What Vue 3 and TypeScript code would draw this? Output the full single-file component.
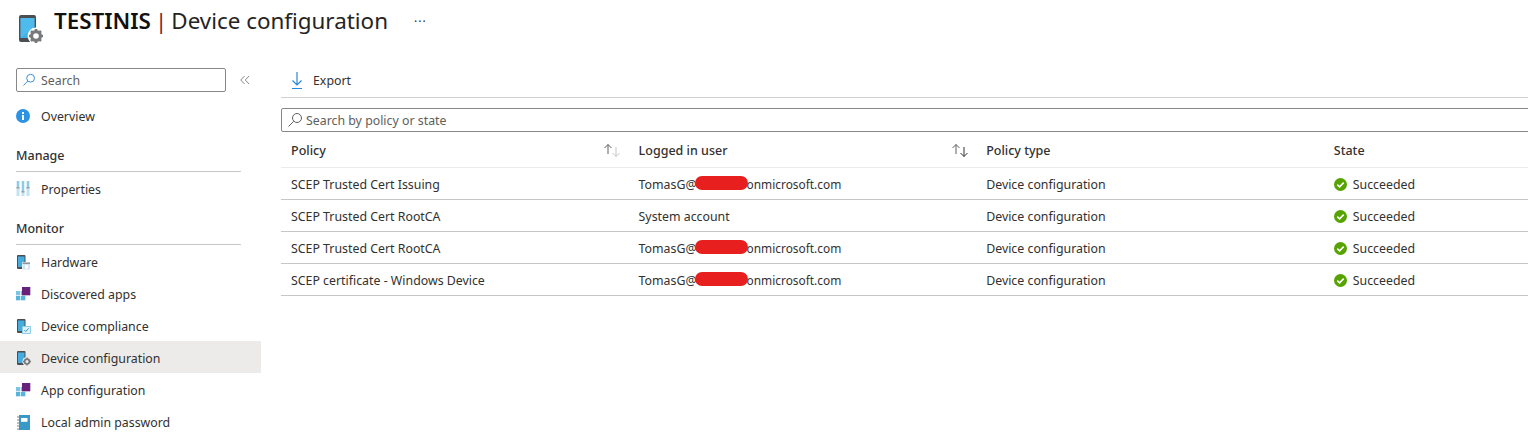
<script setup lang="ts">
const rows = [
  { policy: 'SCEP Trusted Cert Issuing', user: 'TomasG@', tail: 'onmicrosoft.com' },
  { policy: 'SCEP Trusted Cert RootCA', user: 'System account', tail: '' },
  { policy: 'SCEP Trusted Cert RootCA', user: 'TomasG@', tail: 'onmicrosoft.com' },
  { policy: 'SCEP certificate - Windows Device', user: 'TomasG@', tail: 'onmicrosoft.com' },
]
const monitor = [
  { label: 'Hardware', icon: 'hw', active: false },
  { label: 'Discovered apps', icon: 'apps', active: false },
  { label: 'Device compliance', icon: 'comp', active: false },
  { label: 'Device configuration', icon: 'conf', active: true },
  { label: 'App configuration', icon: 'apps', active: false },
  { label: 'Local admin password', icon: 'book', active: false },
]
</script>

<template>
  <div class="page">
    <header class="top">
      <svg class="logo" width="30" height="30" viewBox="0 0 30 30">
        <rect x="4" y="1" width="17" height="27" rx="2" fill="#4b4f54" />
        <rect x="5.500" y="4" width="14" height="20" fill="#3fb0e8" />
        <path d="M19.500 4v9L5.500 24V4z" fill="#5fc4f0" opacity=".5" />
        <circle cx="21" cy="22" r="8.400" fill="#fff" />
        <circle cx="21" cy="22" r="4.400" fill="none" stroke="#77797b" stroke-width="3.200" />
        <path d="M21 15v3M21 26v3M14 22h3M25 22h3M16 17l2.200 2.200M23.800 24.800L26 27M26 17l-2.200 2.200M18.200 24.800L16 27" stroke="#77797b" stroke-width="2.600" />
      </svg>
      <h1 class="title"><b>TESTINIS</b><span class="sep">|</span>Device configuration</h1>
      <span class="dots">···</span>
    </header>

    <div class="body">
      <aside class="side">
        <div class="side-search-row">
          <div class="sbox">
            <svg width="14" height="14" viewBox="0 0 14 14" fill="none" stroke="#3f8fd0" stroke-width="1">
              <circle cx="8.600" cy="5.200" r="3.900" /><path d="M5.800 8L1.500 12.500" />
            </svg>
            <span>Search</span>
          </div>
          <svg class="collapse" width="10" height="10" viewBox="0 0 10 10" fill="none" stroke="#8a8886" stroke-width="1">
            <path d="M4.500 1L.8 5l3.700 4M9 1L5.300 5 9 9" />
          </svg>
        </div>

        <a class="item">
          <svg width="14" height="14" viewBox="0 0 14 14"><circle cx="7" cy="7" r="7" fill="#2b92e4" /><rect x="6" y="6" width="2" height="5" fill="#fff" /><rect x="6" y="3" width="2" height="2" fill="#fff" /></svg>
          <span>Overview</span>
        </a>

        <div class="group">Manage</div>
        <a class="item">
          <svg width="14" height="16" viewBox="0 0 14 16">
            <g fill="#c3e3f3"><rect x="0.500" y="0" width="3" height="15" /><rect x="5.500" y="0" width="3" height="15" /><rect x="10.500" y="0" width="3" height="15" /></g>
            <g fill="#59b4d9"><rect x="1.500" y="0" width="1" height="6" /><rect x="6.500" y="0" width="1" height="10" /><rect x="11.500" y="0" width="1" height="6" /></g>
            <g fill="#9aa0a4"><rect x="0.500" y="6" width="3" height="1.500" /><rect x="5.500" y="10" width="3" height="1.500" /><rect x="10.500" y="6" width="3" height="1.500" /></g>
          </svg>
          <span>Properties</span>
        </a>

        <div class="group second">Monitor</div>
        <a v-for="m in monitor" :key="m.label" class="item" :class="{ active: m.active }">
          <svg width="14" height="16" viewBox="0 0 14 16">
            <template v-if="m.icon === 'apps'">
              <rect x="0" y="5" width="4.300" height="4.300" fill="#7cc4e4" />
              <rect x="5" y="5" width="4.300" height="4.300" fill="#7cc4e4" />
              <rect x="0" y="10" width="4.300" height="4.300" fill="#59b4d9" />
              <rect x="5" y="10" width="4.300" height="4.300" fill="#59b4d9" />
              <rect x="6" y="1" width="8.300" height="8.300" fill="#68217a" />
            </template>
            <template v-else-if="m.icon === 'book'">
              <rect x="3" y="1" width="11" height="15" fill="#3999c6" />
              <rect x="5" y="4" width="6.500" height="3.800" fill="#fff" />
              <path d="M1 3h2.500M1 6h2.500M1 9h2.500M1 12h2.500M1 15h2.500" stroke="#7d7f80" stroke-width="1" />
            </template>
            <template v-else>
              <rect x="1" y="1" width="8.500" height="14" rx="1" fill="#4b4f54" />
              <rect x="2" y="2.500" width="6.500" height="10.500" fill="#45ace0" />
              <g v-if="m.icon === 'hw'">
                <rect x="6" y="8" width="8.500" height="8" fill="#fff" />
                <rect x="6.500" y="8.500" width="7.500" height="7" fill="#cfe6f2" />
                <rect x="6.500" y="8.500" width="7.500" height="1.500" fill="#8f9498" />
                <rect x="9" y="11" width="3" height="3.500" fill="#fff" />
              </g>
              <g v-if="m.icon === 'comp'">
                <rect x="6" y="8" width="9" height="8" fill="#fff" />
                <rect x="6.500" y="8.500" width="8" height="7" fill="#dff0f9" stroke="#7cc4e4" stroke-width=".8" />
                <path d="M8.300 12l1.500 1.500 2.800-3.200" stroke="#3999c6" stroke-width="1" fill="none" />
              </g>
              <g v-if="m.icon === 'conf'">
                <circle cx="11" cy="11.500" r="4.600" fill="#edebe9" />
                <circle cx="11" cy="11.500" r="2.400" fill="none" stroke="#77797b" stroke-width="1.700" />
                <path d="M11 7.500v1.500M11 14v1.500M7 11.500h1.500M13.500 11.500H15" stroke="#77797b" stroke-width="1.300" />
              </g>
            </template>
          </svg>
          <span>{{ m.label }}</span>
        </a>
      </aside>

      <main class="main">
        <div class="toolbar">
          <svg width="14" height="18" viewBox="0 0 14 18" fill="none" stroke="#2b88d8" stroke-width="1.200">
            <path d="M7 0v13M2.500 8.500L7 13l4.500-4.500M2 16.500h10" />
          </svg>
          <span>Export</span>
        </div>

        <div class="filter">
          <svg width="16" height="16" viewBox="0 0 16 16" fill="none" stroke="#605e5c" stroke-width="1">
            <circle cx="10" cy="6" r="4.500" /><path d="M6.700 9.300L1.500 14.500" />
          </svg>
          <span>Search by policy or state</span>
        </div>

        <div class="row head">
          <div class="cell">Policy
            <svg class="sort" width="18" height="13" viewBox="0 0 18 13" fill="none" stroke-width="1">
              <path d="M5 10V.5M1.500 4L5 .5 8.500 4" stroke="#605e5c" /><path d="M13 3v9.500M9.500 9l3.500 3.500L16.500 9" stroke="#c8c6c4" />
            </svg>
          </div>
          <div class="cell">Logged in user
            <svg class="sort" width="18" height="13" viewBox="0 0 18 13" fill="none" stroke-width="1">
              <path d="M5 10V.5M1.500 4L5 .5 8.500 4" stroke="#605e5c" /><path d="M13 3v9.500M9.500 9l3.500 3.500L16.500 9" stroke="#323130" />
            </svg>
          </div>
          <div class="cell">Policy type</div>
          <div class="cell">State</div>
        </div>

        <div v-for="(r, i) in rows" :key="i" class="row">
          <div class="cell">{{ r.policy }}</div>
          <div class="cell user">
            {{ r.user }}<span v-if="r.tail" class="mask-wrap"><span class="mask" /></span><span class="tail">{{ r.tail }}</span>
          </div>
          <div class="cell">Device configuration</div>
          <div class="cell state">
            <svg width="13" height="13" viewBox="0 0 13 13">
              <circle cx="6.500" cy="6.500" r="6.500" fill="#57a300" />
              <path d="M3.300 6.700l2.300 2.200 4.100-4.300" fill="none" stroke="#fff" stroke-width="1.600" />
            </svg>
            <span>Succeeded</span>
          </div>
        </div>
      </main>
    </div>
  </div>
</template>

<style scoped>
.page {
  width: 1528px;
  height: 439px;
  overflow: hidden;
  background: #fff;
  font-family: "Noto Sans", "Open Sans", sans-serif;
  font-size: 12.350px;
  color: #323130;
}
.top {
  height: 68px;
  display: flex;
  align-items: flex-start;
  padding-left: 15px;
  box-sizing: border-box;
}
.logo { margin-top: 14px; flex: none; }
.title {
  margin: 5px 0 0 9px;
  font-size: 22.400px;
  line-height: 32px;
  font-weight: 400;
  color: #252423;
  white-space: nowrap;
}
.title b { font-weight: 600; color: #111; }
.sep { color: #7d1f2b; margin: 0 4px; font-weight: 400; }
.dots { margin: 14px 0 0 26px; font-size: 12px; line-height: 16px; letter-spacing: 1px; color: #323130; }
.body { display: flex; }
.side { width: 261px; flex: none; }
.side-search-row { display: flex; align-items: center; padding-left: 16px; height: 24px; margin-bottom: 7px; }
.sbox {
  width: 210px;
  height: 24px;
  box-sizing: border-box;
  border: 1px solid #8a8886;
  border-radius: 2px;
  display: flex;
  align-items: center;
  gap: 5px;
  padding-left: 5px;
  color: #605e5c;
}
.collapse { margin-left: 14px; }
.item {
  height: 32px;
  display: flex;
  align-items: center;
  gap: 11px;
  padding: 2px 0 0 16px;
  box-sizing: border-box;
}
.item svg { flex: none; overflow: visible; }
.item.active { background: #edebe9; }
.group {
  margin: 16px 20px 0 16px;
  height: 24px;
  line-height: 18px;
  border-bottom: 1px solid #c8c6c4;
  font-weight: 500;
  font-size: 12.500px;
}
.main { flex: 1; margin-left: 20px; min-width: 0; }
.toolbar {
  height: 33px;
  display: flex;
  align-items: center;
  gap: 9px;
  padding-left: 9px;
  border-bottom: 1px solid #d2d0ce;
  margin-bottom: 10px;
  margin-top: -4px;
}
.filter {
  height: 24px;
  box-sizing: border-box;
  border: 1px solid #8a8886;
  border-radius: 2px;
  display: flex;
  align-items: center;
  gap: 3px;
  padding-left: 5px;
  margin-right: -6px;
  color: #605e5c;
}
.row {
  display: grid;
  grid-template-columns: 347.600px 347.600px 347.600px 1fr;
  height: 32px;
  align-items: center;
  box-sizing: border-box;
  border-bottom: 1px solid #c8c6c4;
}
.row.head { height: 36px; font-weight: 500; font-size: 12.500px; border-bottom-color: #edebe9; }
.cell {
  position: relative;
  padding: 2px 0 0 10px;
  white-space: nowrap;
}
.sort { position: absolute; right: 7.500px; top: 4px; }
.mask-wrap { display: inline-block; width: 50px; position: relative; height: 10px; }
.mask {
  position: absolute;
  left: -2px;
  top: -3px;
  width: 53px;
  height: 14px;
  border-radius: 7px;
  background: #e81f1f;
}
.tail { font-size: 11.900px; }
.state { display: flex; align-items: center; gap: 6px; }
</style>
